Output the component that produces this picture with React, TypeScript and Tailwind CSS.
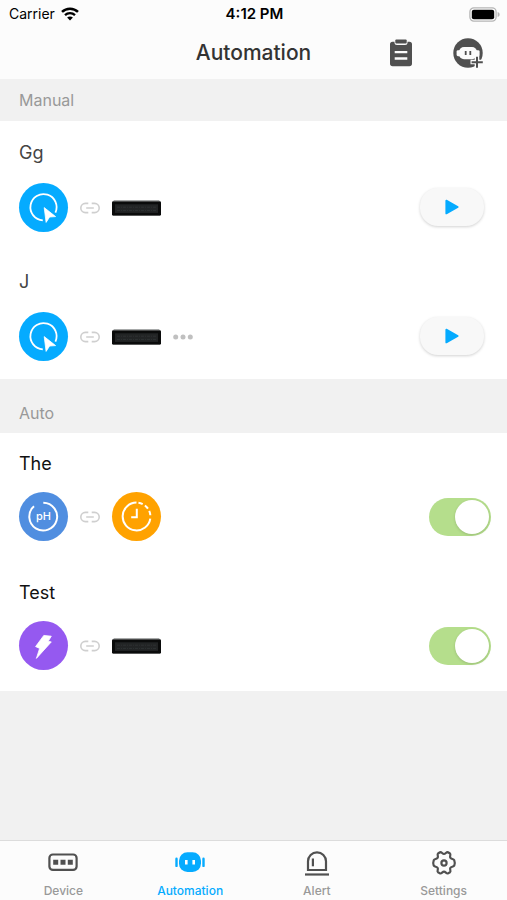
import React, { useState } from "react";

const WifiIcon = () => (
  <svg width="18" height="14" viewBox="0 0 18 14" fill="none" stroke="#000">
    <path d="M1 4.9C5.4.6 12.6.6 17 4.9" strokeWidth="2.5" />
    <path d="M4 8.1c2.8-2.7 7.2-2.7 10 0" strokeWidth="2.3" />
    <path d="M9 13.6 6.1 10.5c1.6-1.5 4.2-1.5 5.8 0z" fill="#000" stroke="none" />
  </svg>
);

const BatteryIcon = () => (
  <svg width="31" height="15" viewBox="0 0 31 15">
    <rect x="0.9" y="0.9" width="26.2" height="13.2" rx="4" fill="#fff" stroke="#b5b5b5" strokeWidth="1.3" />
    <rect x="2.8" y="2.8" width="22.4" height="9.4" rx="2" fill="#000" />
    <path d="M28.6 5v5c1.6-.6 2-1.5 2-2.5s-.4-1.9-2-2.5z" fill="#b5b5b5" />
  </svg>
);

const ClipboardIcon = () => (
  <svg width="24" height="28" viewBox="0 0 24 28">
    <path
      d="M3.5 2.8h2v.7A2.5 2.5 0 0 0 8 6h8a2.5 2.5 0 0 0 2.5-2.5v-.7h2A2.5 2.5 0 0 1 23 5.3v19.2a2.7 2.7 0 0 1-2.7 2.7H3.7A2.7 2.7 0 0 1 1 24.5V5.3a2.5 2.5 0 0 1 2.5-2.5z"
      fill="#505050"
    />
    <rect x="6.3" y="0.4" width="11.4" height="4" rx="1" fill="#505050" />
    <path d="M5.7 13.1h12.6M5.7 19.5h12.6" stroke="#fcfcfc" strokeWidth="2.4" />
  </svg>
);

const AddRobotIcon = () => (
  <svg width="30" height="30" viewBox="0 0 30 30">
    <circle cx="15" cy="15" r="14.7" fill="#505050" />
    <rect x="3.6" y="12.2" width="23" height="6" rx="1.4" fill="#fcfcfc" />
    <rect x="6" y="9" width="18" height="12.2" rx="5" fill="#fcfcfc" />
    <path d="M12.7 13v4M17.3 13v4" stroke="#505050" strokeWidth="1.8" />
    <path d="M24 17v14M17.5 24H31" stroke="#fcfcfc" strokeWidth="4.6" />
    <path d="M24 18.7v11M18.6 24.2h11.2" stroke="#505050" strokeWidth="2" />
  </svg>
);

const TapIcon = () => (
  <svg width="49" height="49" viewBox="0 0 49 49">
    <path d="M36.4 29.7A13.1 13.1 0 1 0 23.8 37.3" fill="none" stroke="#fff" strokeWidth="1.8" />
    <path d="M25.2 24.6 36.6 33.6 30.6 34 27.1 39.4z" fill="#fff" stroke="#fff" strokeWidth="0.8" strokeLinejoin="round" />
  </svg>
);

const PhIcon = () => (
  <svg width="49" height="49" viewBox="0 0 49 49">
    <path d="M24.3 10.7A13.9 13.9 0 1 1 15 14.2" fill="none" stroke="#fff" strokeWidth="2" />
    <text x="24.5" y="28" textAnchor="middle" fill="#fff" fontSize="11" fontWeight="500">
      pH
    </text>
  </svg>
);

const TimerIcon = () => (
  <svg width="49" height="49" viewBox="0 0 49 49" fill="none" stroke="#fff" strokeWidth="2">
    <path d="M24.5 10.6A13.9 13.9 0 1 0 38.3 26.6" />
    <path d="M24.5 10.6A13.9 13.9 0 0 1 38.4 24.5" strokeDasharray="4.4 2.6" strokeDashoffset="-2" />
    <path d="M24.8 16.8v8.5h-5.6" />
  </svg>
);

const BoltIcon = () => (
  <svg width="49" height="49" viewBox="0 0 49 49">
    <path
      d="M24.8 14.4 32.3 15.2 29.2 20.3 32.3 20.9 17.4 37.4 20.6 27.4 16.6 25.6z"
      fill="#fff"
      stroke="#fff"
      strokeWidth="0.8"
      strokeLinejoin="round"
    />
  </svg>
);

const LinkIcon = () => (
  <svg width="20" height="12" viewBox="0 0 20 12" fill="none" stroke="#cfcfcf" strokeWidth="1.6">
    <path d="M8.3 1.4H5.4a4.6 4.6 0 0 0 0 9.2h2.9M11.7 1.4h2.9a4.6 4.6 0 0 1 0 9.2h-2.9M6.2 6h7.6" />
  </svg>
);

const DeviceImage = () => (
  <svg width="49" height="16" viewBox="0 0 49 16">
    <path d="M2 .2h45l2 2H0z" fill="#8a8d8d" />
    <rect y="1.6" width="49" height="14" rx="0.8" fill="#0a0b0b" />
    <rect x="3" y="4.3" width="43" height="8.6" fill="#222425" />
    <path d="M5 7.2h39M5 10.4h39" stroke="#303334" strokeWidth="0.9" strokeDasharray="3 1 1 1" />
    <path d="M1 15.5h47" stroke="#3a3c3c" strokeWidth="0.6" />
  </svg>
);

const DotsIcon = () => (
  <svg width="20" height="6" viewBox="0 0 20 6" fill="#c0c0c0">
    <circle cx="2.7" cy="3" r="2.5" />
    <circle cx="10" cy="3" r="2.5" />
    <circle cx="17.3" cy="3" r="2.5" />
  </svg>
);

const PlayIcon = () => (
  <svg width="14" height="16" viewBox="0 0 14 16">
    <path d="M1.3 1.6v12.8L12.7 8z" fill="#05abff" stroke="#05abff" strokeWidth="1.8" strokeLinejoin="round" />
  </svg>
);

const DeviceTabIcon = () => (
  <svg width="30" height="26" viewBox="0 0 30 26">
    <rect x="1.4" y="4.5" width="27.2" height="15.4" rx="3.5" fill="none" stroke="#505050" strokeWidth="2.2" />
    <path d="M5.2 9.7h5v5h-5zM12.5 9.7h5v5h-5zM19.8 9.7h5v5h-5z" fill="#505050" />
  </svg>
);

const RobotTabIcon = () => (
  <svg width="30" height="26" viewBox="0 0 30 26">
    <rect x="4" y="2.3" width="22" height="19.8" rx="8.5" fill="#05abff" />
    <path d="M1.5 8.7v7.2M28.5 8.7v7.2" stroke="#05abff" strokeWidth="2.4" strokeLinecap="round" />
    <path d="M11.3 10.1v4.4M18.7 10.1v4.4" stroke="#fff" strokeWidth="2.6" />
  </svg>
);

const AlertTabIcon = () => (
  <svg width="30" height="26" viewBox="0 0 30 26" fill="none" stroke="#505050" strokeWidth="2.2">
    <path d="M6 20V11.3a9 9 0 0 1 18 0V20z" />
    <path d="M3 24.5H27" />
    <path d="M10.9 8.5v7.8" />
  </svg>
);

const SettingsTabIcon = () => (
  <svg width="30" height="26" viewBox="0 0 30 26" fill="none" stroke="#505050" strokeWidth="2.2" strokeLinejoin="round">
    <path d="M11 2.3c1.6-.7 2.3 1.7 4 1.7s2.4-2.4 4-1.7l2 1.2c1.2 1-.6 2.8.3 4.3s3.3.9 3.9 2.4c.6 1.6.8 3.9.1 5.3-.7 1.5-3.2.9-4 2.4s1 3.3-.3 4.3l-2 1.2c-1.6.7-2.3-1.7-4-1.7s-2.4 2.4-4 1.7l-2-1.2c-1.3-1 .5-2.8-.3-4.3s-3.3-.9-4-2.4c-.7-1.4-.5-3.7.1-5.3.6-1.5 3-.9 3.9-2.4s-.9-3.3.3-4.3z" />
    <circle cx="15" cy="13" r="2.6" />
  </svg>
);

interface AutomationItem {
  id: string;
  name: string;
  trigger: React.ReactNode;
  color: string;
  target: React.ReactNode;
  more?: boolean;
}

const manualItems: AutomationItem[] = [
  { id: "gg", name: "Gg", trigger: <TapIcon />, color: "bg-[#05abff]", target: <DeviceImage /> },
  { id: "j", name: "J", trigger: <TapIcon />, color: "bg-[#05abff]", target: <DeviceImage />, more: true },
];

const autoItems: AutomationItem[] = [
  {
    id: "the",
    name: "The",
    trigger: <PhIcon />,
    color: "bg-[#508ee0]",
    target: (
      <div className="rounded-full bg-[#ffa200]">
        <TimerIcon />
      </div>
    ),
  },
  { id: "test", name: "Test", trigger: <BoltIcon />, color: "bg-[#9559f0]", target: <DeviceImage /> },
];

const tabs = [
  { name: "Device", icon: <DeviceTabIcon /> },
  { name: "Automation", icon: <RobotTabIcon />, active: true },
  { name: "Alert", icon: <AlertTabIcon /> },
  { name: "Settings", icon: <SettingsTabIcon /> },
];

const ItemFlow = ({ item }: { item: AutomationItem }) => (
  <div className="flex items-center gap-3">
    <div className={"rounded-full " + item.color}>{item.trigger}</div>
    <LinkIcon />
    {item.target}
    {item.more ? <DotsIcon /> : null}
  </div>
);

const ManualRow = ({ item }: { item: AutomationItem }) => (
  <li className="pt-5 pb-[18px] pl-[19px] pr-[23px]">
    <h3 id={item.id} className="mb-[18px] text-lg leading-6 text-[#444]">
      {item.name}
    </h3>
    <div className="flex items-center justify-between">
      <ItemFlow item={item} />
      <button
        aria-labelledby={item.id}
        className="mb-0.5 flex h-[38px] w-16 items-center justify-center rounded-[18px] bg-[#f8f8f8] shadow-[0_1px_3px_rgba(0,0,0,0.18)]"
      >
        <PlayIcon />
      </button>
    </div>
  </li>
);

const AutoRow = ({ item }: { item: AutomationItem }) => {
  const [on, setOn] = useState(true);

  return (
    <li className="pt-[19px] pb-[21px] pl-[19px] pr-4">
      <h3 className="mb-4 text-lg leading-6 text-[#111]">
        <label htmlFor={item.id}>{item.name}</label>
      </h3>
      <div className="flex items-center justify-between">
        <ItemFlow item={item} />
        <input
          id={item.id}
          type="checkbox"
          role="switch"
          checked={on}
          onChange={() => setOn(!on)}
          className="flex h-[38px] w-[62px] appearance-none items-center rounded-full bg-gray-300 px-0.5 before:size-[34px] before:rounded-full before:bg-white before:shadow-[0_1px_3px_rgba(0,0,0,0.15)] checked:justify-end checked:bg-[#b5de8c]"
        />
      </div>
    </li>
  );
};

export default function App() {
  return (
    <div className="flex min-h-screen flex-col bg-[#f1f1f1] font-['Inter',sans-serif]">
      <header className="bg-[#fcfcfc]">
        <div className="grid h-7 grid-cols-3 items-center pl-[9px] pr-[7px] text-sm text-black">
          <div className="flex items-center gap-1.5">
            <span>Carrier</span>
            <WifiIcon />
          </div>
          <span className="text-center text-[15px] font-semibold">4:12 PM</span>
          <div className="flex justify-end">
            <BatteryIcon />
          </div>
        </div>
        <div className="grid h-[51px] grid-cols-[1fr_auto_1fr] items-center pb-0.5">
          <h1 className="col-start-2 text-[21px] leading-7 font-medium text-[#333]">Automation</h1>
          <div className="flex items-center justify-end gap-10 pr-6">
            <button aria-label="Log">
              <ClipboardIcon />
            </button>
            <button aria-label="Add automation">
              <AddRobotIcon />
            </button>
          </div>
        </div>
      </header>

      <main className="flex-1">
        <h2 className="flex h-[42px] items-center px-[19px] text-base text-[#999]">Manual</h2>
        <ul className="bg-white">
          {manualItems.map((item) => (
            <ManualRow key={item.id} item={item} />
          ))}
        </ul>
        <h2 className="flex h-[54px] items-end px-[19px] pb-2 text-base text-[#999]">Auto</h2>
        <ul className="bg-white">
          {autoItems.map((item) => (
            <AutoRow key={item.id} item={item} />
          ))}
        </ul>
      </main>

      <nav className="grid grid-cols-4 border-t border-[#dcdcdc] bg-[#fcfcfc]">
        {tabs.map((tab) => (
          <a
            key={tab.name}
            href="#"
            className={
              "flex h-[59px] flex-col items-center justify-between pt-[9px] pb-px text-xs font-medium " +
              (tab.active ? "text-[#05abff]" : "text-[#999]")
            }
          >
            {tab.icon}
            <span>{tab.name}</span>
          </a>
        ))}
      </nav>
    </div>
  );
}
